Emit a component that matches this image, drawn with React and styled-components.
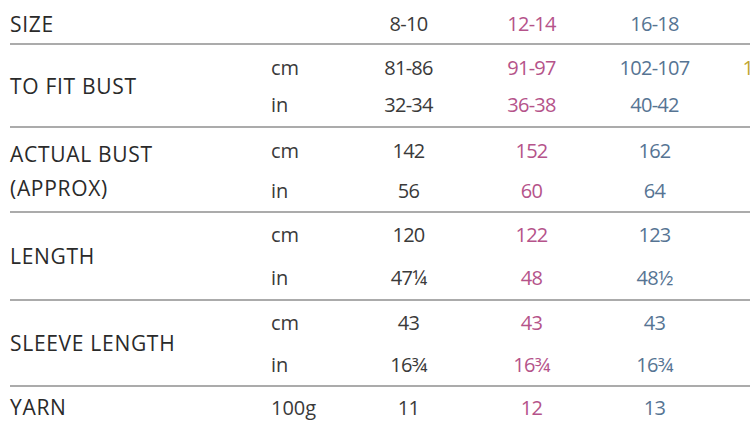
import React from 'react'
import styled, { createGlobalStyle } from 'styled-components'

const GlobalStyle = createGlobalStyle`
    html, body {
        margin: 0;
        padding: 0;
        background: #ffffff;
        overflow: hidden;
    }
    body {
        font-family: "Open Sans", "Noto Sans", sans-serif;
    }
`;

const sizeColors = ['#3a3a3a', '#b5538a', '#567493', '#c0a633'];

const Table = styled.div`
    width: 980px;
    padding-left: 10px;
    color: #222222;
`;

const Section = styled.div`
    display: grid;
    grid-template-columns: 261px 76px repeat(4, 123px);
    grid-template-rows: ${({rows, rowHeight}) => `repeat(${rows}, ${rowHeight}px)`};
    padding-top: ${({padTop}) => padTop}px;
    height: ${({height}) => height}px;
    box-sizing: border-box;
    border-bottom: ${({last}) => last ? 'none' : '2px solid #ababab'};
`;

const Label = styled.div`
    grid-column: 1;
    grid-row: 1 / span ${({span}) => span};
    align-self: center;
    font-size: 21px;
    line-height: 34px;
    letter-spacing: 0.7px;
    color: #2a2a2a;
`;

const Unit = styled.div`
    grid-column: 2;
    display: flex;
    align-items: center;
    font-size: 20px;
    color: #3a3a3a;
`;

const Value = styled.div`
    display: flex;
    align-items: center;
    justify-content: center;
    font-size: 20px;
    letter-spacing: -0.7px;
    white-space: nowrap;
    color: ${({col}) => sizeColors[col]};
`;

const sections = [
    { label: ['SIZE'], height: 45, padTop: 4, rowHeight: 39, rows: [
        { unit: '', values: ['8-10', '12-14', '16-18', '20-22'] },
    ]},
    { label: ['TO FIT BUST'], height: 83, padTop: 4, rowHeight: 37, rows: [
        { unit: 'cm', values: ['81-86', '91-97', '102-107', '107-112'] },
        { unit: 'in', values: ['32-34', '36-38', '40-42', '44-46'] },
    ]},
    { label: ['ACTUAL BUST', '(APPROX)'], height: 84.5, padTop: 3, rowHeight: 39.5, rows: [
        { unit: 'cm', values: ['142', '152', '162', '172'] },
        { unit: 'in', values: ['56', '60', '64', '68'] },
    ]},
    { label: ['LENGTH'], height: 88.5, padTop: 0, rowHeight: 43, rows: [
        { unit: 'cm', values: ['120', '122', '123', '124'] },
        { unit: 'in', values: ['47¼', '48', '48½', '49'] },
    ]},
    { label: ['SLEEVE LENGTH'], height: 86, padTop: 0, rowHeight: 42, rows: [
        { unit: 'cm', values: ['43', '43', '43', '44'] },
        { unit: 'in', values: ['16¾', '16¾', '16¾', '17¼'] },
    ]},
    { label: ['YARN'], height: 36, padTop: 2, rowHeight: 36, last: true, rows: [
        { unit: '100g', values: ['11', '12', '13', '14'] },
    ]},
];

const App = () => {
  return (
    <>
      <GlobalStyle />
      <Table>
        {sections.map((s) => (
          <Section
            key={s.label[0]}
            rows={s.rows.length}
            rowHeight={s.rowHeight}
            padTop={s.padTop}
            height={s.height}
            last={s.last}
          >
            <Label span={s.rows.length}>
              {s.label.map((line) => <div key={line}>{line}</div>)}
            </Label>
            {s.rows.map((r, i) => (
              <React.Fragment key={i}>
                <Unit style={{ gridRow: i + 1 }}>{r.unit}</Unit>
                {r.values.map((v, c) => (
                  <Value key={c} col={c} style={{ gridRow: i + 1, gridColumn: c + 3 }}>{v}</Value>
                ))}
              </React.Fragment>
            ))}
          </Section>
        ))}
      </Table>
    </>
  )
}

export default App
